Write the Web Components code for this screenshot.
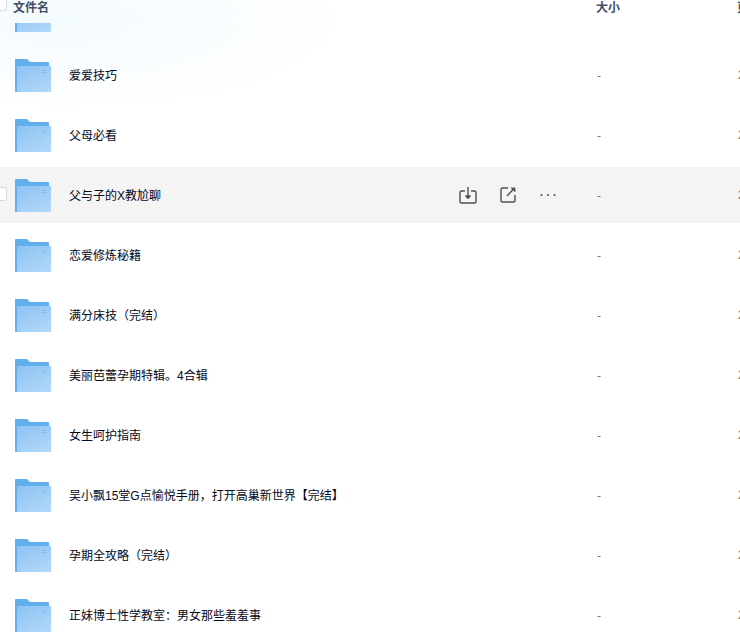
<!DOCTYPE html>
<html lang="zh">
<head>
<meta charset="utf-8">
<style>
  html, body { margin: 0; height: 100%; overflow: hidden; background: #fff; }
  body { font-family: "Liberation Sans", "Noto Sans CJK SC", sans-serif; }
</style>
</head>
<body>
<file-list>
  <file-row clipped></file-row>
  <file-row>爱爱技巧</file-row>
  <file-row>父母必看</file-row>
  <file-row hover>父与子的X教尬聊</file-row>
  <file-row>恋爱修炼秘籍</file-row>
  <file-row>满分床技（完结）</file-row>
  <file-row>美丽芭蕾孕期特辑。4合辑</file-row>
  <file-row>女生呵护指南</file-row>
  <file-row>吴小飘15堂G点愉悦手册，打开高巢新世界【完结】</file-row>
  <file-row>孕期全攻略（完结）</file-row>
  <file-row>正妹博士性学教室：男女那些羞羞事</file-row>
</file-list>
<script>
  class FileList extends HTMLElement {
    constructor() {
      super();
      this.attachShadow({ mode: 'open' });
      this.shadowRoot.innerHTML = `
        <style>
          :host {
            display: flex;
            flex-direction: column;
            height: 643px;
            overflow: hidden;
            background: radial-gradient(ellipse 280px 90px at 60px 20px, #f3fafe 0%, #fff 100%);
          }
          .head {
            display: grid;
            grid-template-columns: 596px 141px 60px;
            flex: none;
            width: 797px;
            height: 22px;
            padding-top: 1px;
            font-size: 12px;
            font-weight: bold;
            line-height: 14px;
            color: #424e66;
            white-space: nowrap;
          }
          .name { display: flex; align-items: flex-start; gap: 6px; }
          .box {
            flex: none;
            width: 6px;
            height: 10px;
            margin-top: -1px;
            background: #fff;
            border: 1px solid #d9d9d9;
            border-left: 0;
            border-top: 0;
            border-radius: 0 3px 3px 0;
          }
          .rows { flex: 1; min-height: 0; overflow: hidden; }
          .inner { margin-top: -38px; }
        </style>
        <div class="head">
          <div class="name"><span class="box"></span>文件名</div>
          <div>大小</div>
          <div>更新时间</div>
        </div>
        <div class="rows"><div class="inner"><slot></slot></div></div>
      `;
    }
  }

  class FileRow extends HTMLElement {
    constructor() {
      super();
      this.attachShadow({ mode: 'open' });
      this.shadowRoot.innerHTML = `
        <style>
          :host {
            display: block;
            width: 800px;
            padding: 2px 0;
            font-size: 12px;
            color: #03081a;
          }
          .row {
            display: flex;
            align-items: center;
            height: 56px;
          }
          :host([hover]) .row { background: #f4f4f4; }
          :host([clipped]) .dash, :host([clipped]) .date { visibility: hidden; font-size: 0; }
          .check { flex: none; width: 15px; }
          .check i {
            display: none;
            width: 6px;
            height: 12px;
            margin-bottom: 2px;
            background: #fff;
            border: 1px solid #d9d9d9;
            border-left: 0;
            border-radius: 0 3px 3px 0;
          }
          :host([hover]) .check i { display: block; }
          svg.folder { flex: none; width: 36px; height: 33px; margin: 1px 18px 0 0; }
          .label { flex: 1; min-width: 0; white-space: nowrap; padding-bottom: 2px; }
          .tools { flex: none; visibility: hidden; display: flex; align-items: center; gap: 20px; width: 139px; }
          :host([hover]) .tools { visibility: visible; }
          .tools svg { width: 20px; height: 20px; fill: none; stroke: #4d4f57; stroke-width: 1.4; }
          .dash { flex: none; width: 141px; padding-top: 2px; color: #747a8c; }
          .date { flex: none; width: 62px; color: #747a8c; white-space: nowrap; }
        </style>
        <div class="row">
          <div class="check"><i></i></div>
          <svg class="folder" viewBox="0 0 36 33">
            <defs>
              <linearGradient id="f" x1="0.2" y1="0" x2="0.8" y2="1">
                <stop offset="0" stop-color="#8fc4f3"/>
                <stop offset="1" stop-color="#b1d7f9"/>
              </linearGradient>
            </defs>
            <path d="M0 1A1 1 0 0 1 1 0H12L15 3H33A1 1 0 0 1 34 4V7H2V33H1A1 1 0 0 1 0 32Z" fill="#63aeec"/>
            <path d="M2 7H35A1 1 0 0 1 36 8V32A1 1 0 0 1 35 33H2Z" fill="url(#f)"/>
            <path d="M27 11.500h5M27 13.500h5" stroke="#85bdee" stroke-width="1"/>
          </svg>
          <div class="label"><slot></slot></div>
          <div class="tools">
            <svg viewBox="0 0 20 20" stroke-linecap="round" stroke-linejoin="round">
              <path d="M6.500 6H3.500A1.500 1.500 0 0 0 2 7.500V16.500A1.500 1.500 0 0 0 3.500 18H16.500A1.500 1.500 0 0 0 18 16.500V7.500A1.500 1.500 0 0 0 16.500 6H13.500"/>
              <path d="M10 2.500V12"/>
              <path d="M7.800 11L10 13.200L12.200 11Z" fill="#4d4f57"/>
            </svg>
            <svg viewBox="0 0 20 20" stroke-linecap="round" stroke-linejoin="round">
              <path d="M9.500 3H4.500A1.500 1.500 0 0 0 3 4.500V15.500A1.500 1.500 0 0 0 4.500 17H15.500A1.500 1.500 0 0 0 17 15.500V10.500"/>
              <path d="M9.500 10.500L15 4.500"/>
              <path d="M13.500 3H17V6.500Z" fill="#4d4f57" stroke-width="0.8"/>
            </svg>
            <svg viewBox="0 0 20 20">
              <circle cx="3.500" cy="10" r="1" fill="#4d4f57" stroke="none"/>
              <circle cx="10" cy="10" r="1" fill="#4d4f57" stroke="none"/>
              <circle cx="16.500" cy="10" r="1" fill="#4d4f57" stroke="none"/>
            </svg>
          </div>
          <div class="dash">-</div>
          <div class="date">2022-05-10</div>
        </div>
      `;
    }
  }

  customElements.define('file-list', FileList);
  customElements.define('file-row', FileRow);
</script>
</body>
</html>
